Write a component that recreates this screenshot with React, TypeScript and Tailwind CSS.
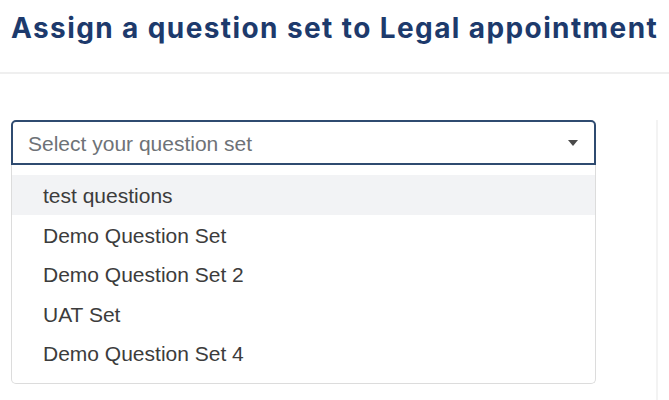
import { useState } from "react";

const sets = ["test questions", "Demo Question Set", "Demo Question Set 2", "UAT Set", "Demo Question Set 4"];

export default function App() {
  const [active, setActive] = useState(0);

  return (
    <div className="w-[669px] h-[400px] bg-white overflow-hidden font-['Liberation_Sans',Arial,sans-serif]">
      {/* header */}
      <div className="h-[74px] pl-[11px] pt-[8px] border-b-2 border-[#efefef]">
        <h1 className="text-[28px] leading-[40px] font-bold tracking-[1.4px] text-[#1d3a6c] font-['Inter',sans-serif] whitespace-nowrap">
          Assign a question set to Legal appointment
        </h1>
      </div>

      <div className="flex pt-[46px]">
        {/* select + menu */}
        <div className="ml-[11px] w-[585px]">
          <div className="h-[45px] flex items-center justify-between pl-[15px] pr-[16px] pt-[3px] border-2 border-[#2f4b70] rounded-t-[5px]">
            <span className="text-[21px] text-[#6e7277]">Select your question set</span>
            <svg width="10" height="6" viewBox="0 0 10 6" className="-mt-[3px]">
              <path d="M0 0 L10 0 L5 6 Z" fill="#4a4a4a" />
            </svg>
          </div>
          <ul className="py-[10px] border-[1.5px] border-t-0 border-[#dcdcdc] rounded-b-[5px]">
            {sets.map((s, i) => (
              <li
                key={s}
                onMouseEnter={() => setActive(i)}
                className={`h-[39.5px] flex items-center pl-[31px] pt-[2px] text-[21px] text-[#3c3c3c] cursor-pointer ${
                  active === i ? "bg-[#f2f3f5]" : ""
                }`}
              >
                {s}
              </li>
            ))}
          </ul>
        </div>

        {/* right panel edge */}
        <div className="ml-[60px] h-[300px] border-l-2 border-[#f3f3f3]" />
      </div>
    </div>
  );
}
